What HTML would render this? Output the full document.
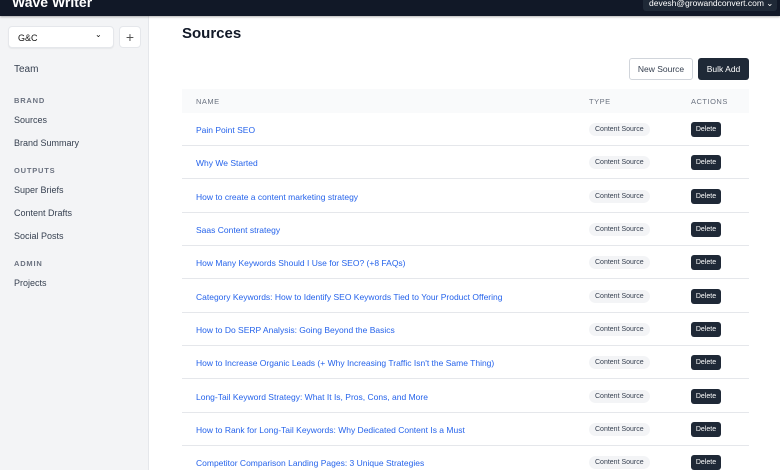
<!DOCTYPE html>
<html><head><style>
*{margin:0;padding:0;box-sizing:border-box}
html,body{width:780px;height:470px;overflow:hidden}
body{font-family:"Liberation Sans",sans-serif;background:#fff;position:relative}
.top{position:absolute;left:0;top:0;width:780px;height:16px;background:#111827;box-shadow:0 1px 2px rgba(0,0,0,.3);z-index:2}
.logo{position:absolute;left:12px;top:-6px;color:#fff;font-weight:bold;font-size:14px}
.user{position:absolute;left:643px;top:0;width:134px;height:11px;background:#1f2937;border-radius:0 0 3px 3px;color:#fff;font-size:8.5px;line-height:7px;padding-left:6px;white-space:nowrap;overflow:hidden}
.side{position:absolute;left:0;top:16px;width:149px;height:454px;background:#f3f4f6;border-right:1px solid #e5e7eb}
.sel{position:absolute;left:8px;top:10px;width:106px;height:22px;background:#fff;border:1px solid #e5e7eb;border-radius:4px;font-size:9px;color:#111;padding:6px 0 0 9px;box-shadow:0 1px 1px rgba(0,0,0,.05)}
.plus{position:absolute;left:119px;top:10px;width:22px;height:22px;background:#fff;border:1px solid #e5e7eb;border-radius:4px;font-size:14px;color:#555;text-align:center;line-height:20px}
.nav{position:absolute;left:14px;font-size:9px;color:#374151}
.hd{position:absolute;left:14px;font-size:7.5px;color:#6b7280;letter-spacing:.8px;font-weight:bold}
h1{position:absolute;left:182px;top:25px;font-size:15px;color:#111827}
.btn{position:absolute;top:58px;height:22px;border-radius:3px;font-size:8.5px;text-align:center;line-height:20px}
.th{position:absolute;left:182px;top:89px;width:567px;height:24px;background:#f9fafb;font-size:7.5px;color:#6b7280;letter-spacing:.5px}
.th span{position:absolute;top:8px}
.row{position:absolute;left:182px;width:567px;height:33px;border-bottom:1px solid #e5e7eb;font-size:8.5px}
.row a{position:absolute;left:14px;top:12px;color:#2563eb;text-decoration:none}
.tag{position:absolute;left:407px;top:10px;height:13px;padding:0 6px;background:#f3f4f6;border-radius:7px;font-size:7px;color:#374151;line-height:14px}
.del{position:absolute;left:509px;top:9px;width:30px;height:15px;background:#1f2937;border-radius:3px;color:#fff;font-size:7px;text-align:center;line-height:15px}
</style></head><body>
<div class="top"><div class="logo">Wave Writer</div><div class="user">devesh@growandconvert.com ⌄</div></div>
<div class="side">
<div class="sel">G&amp;C<span style="position:absolute;left:86px;top:3px;font-size:8px">⌄</span></div>
<div class="plus">+</div>
<div class="nav" style="top:48px;font-size:10px">Team</div>
<div class="hd" style="top:80px">BRAND</div>
<div class="nav" style="top:99px">Sources</div>
<div class="nav" style="top:122px">Brand Summary</div>
<div class="hd" style="top:150px">OUTPUTS</div>
<div class="nav" style="top:169px">Super Briefs</div>
<div class="nav" style="top:192px">Content Drafts</div>
<div class="nav" style="top:215px">Social Posts</div>
<div class="hd" style="top:243px">ADMIN</div>
<div class="nav" style="top:262px">Projects</div>
</div>
<h1>Sources</h1>
<div class="btn" style="left:629px;width:64px;border:1px solid #d1d5db;color:#374151;background:#fff">New Source</div>
<div class="btn" style="left:698px;width:51px;background:#1f2937;color:#fff;line-height:22px">Bulk Add</div>
<div class="th"><span style="left:14px">NAME</span><span style="left:407px">TYPE</span><span style="left:509px">ACTIONS</span></div>
<div class="row" style="top:113px"><a>Pain Point SEO</a><div class="tag">Content Source</div><div class="del">Delete</div></div>
<div class="row" style="top:146px"><a>Why We Started</a><div class="tag">Content Source</div><div class="del">Delete</div></div>
<div class="row" style="top:180px"><a>How to create a content marketing strategy</a><div class="tag">Content Source</div><div class="del">Delete</div></div>
<div class="row" style="top:213px"><a>Saas Content strategy</a><div class="tag">Content Source</div><div class="del">Delete</div></div>
<div class="row" style="top:246px"><a>How Many Keywords Should I Use for SEO? (+8 FAQs)</a><div class="tag">Content Source</div><div class="del">Delete</div></div>
<div class="row" style="top:280px"><a>Category Keywords: How to Identify SEO Keywords Tied to Your Product Offering</a><div class="tag">Content Source</div><div class="del">Delete</div></div>
<div class="row" style="top:313px"><a>How to Do SERP Analysis: Going Beyond the Basics</a><div class="tag">Content Source</div><div class="del">Delete</div></div>
<div class="row" style="top:346px"><a>How to Increase Organic Leads (+ Why Increasing Traffic Isn't the Same Thing)</a><div class="tag">Content Source</div><div class="del">Delete</div></div>
<div class="row" style="top:380px"><a>Long-Tail Keyword Strategy: What It Is, Pros, Cons, and More</a><div class="tag">Content Source</div><div class="del">Delete</div></div>
<div class="row" style="top:413px"><a>How to Rank for Long-Tail Keywords: Why Dedicated Content Is a Must</a><div class="tag">Content Source</div><div class="del">Delete</div></div>
<div class="row" style="top:446px"><a>Competitor Comparison Landing Pages: 3 Unique Strategies</a><div class="tag">Content Source</div><div class="del">Delete</div></div>
</body></html>
